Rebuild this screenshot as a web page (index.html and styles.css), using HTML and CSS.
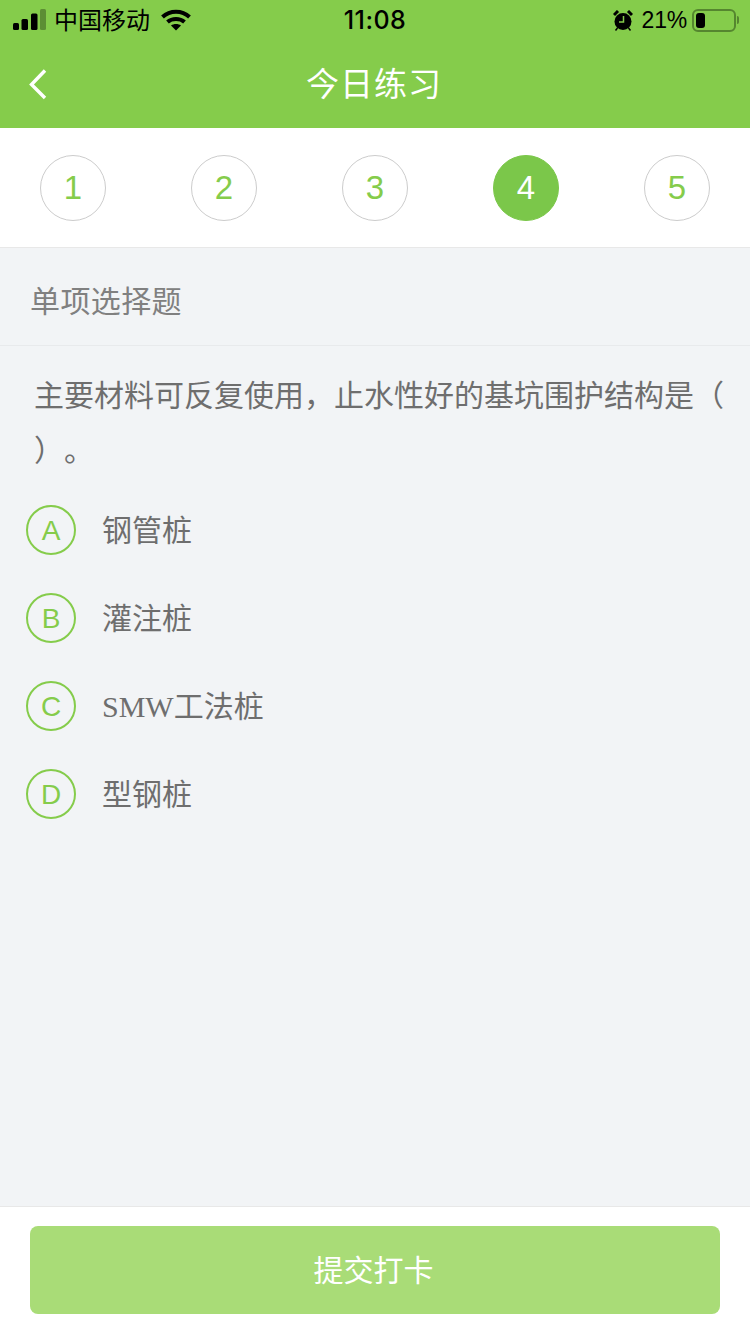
FILE: index.html
```html
<!DOCTYPE html>
<html lang="zh-CN">
<head>
    <meta charset="UTF-8">
    <title>今日练习</title>
    <link rel="stylesheet" href="styles.css">
</head>
<body>
    <div class="top">
        <div class="status">
            <div class="status-left">
                <svg class="signal" width="34" height="24" viewBox="0 0 34 24">
                    <rect x="1" y="15" width="6" height="7" rx="1.500" fill="#000"/>
                    <rect x="9.500" y="11" width="6.500" height="11" rx="1.500" fill="#000"/>
                    <rect x="19" y="5.500" width="6.500" height="16.500" rx="1.500" fill="#000"/>
                    <rect x="28" y="1" width="6" height="21" rx="1.500" fill="#000" opacity="0.3"/>
                </svg>
                <span class="carrier">中国移动</span>
                <svg class="wifi" width="30" height="22" viewBox="0 0 30 22">
                    <path d="M1.500 8C9 1 21 1 28.500 8" fill="none" stroke="#000" stroke-width="4"/>
                    <path d="M6.500 13C11 9 19 9 23.500 13" fill="none" stroke="#000" stroke-width="4"/>
                    <path d="M10 16.500C12.500 14.500 17.500 14.500 20 16.500L15 21.500Z" fill="#000"/>
                </svg>
            </div>
            <div class="clock">11:08</div>
            <div class="status-right">
                <svg class="alarm" width="20" height="21" viewBox="0 0 20 21">
                    <circle cx="10" cy="11.500" r="8.500" fill="#000"/>
                    <path d="M1 5L5 1M15 1L19 5" stroke="#000" stroke-width="3"/>
                    <path d="M2.500 20.500L4.500 18M17.500 20.500L15.500 18" stroke="#000" stroke-width="1.500"/>
                    <path d="M10.500 6V12H6" fill="none" stroke="#85cc4b" stroke-width="1.500"/>
                </svg>
                <span class="percent">21%</span>
                <div class="battery"><div class="battery-level"></div></div>
                <div class="battery-cap"></div>
            </div>
        </div>
        <div class="nav">
            <svg class="back" width="20" height="32" viewBox="0 0 20 32">
                <path d="M17 2.500L3.500 16.500L17 30" fill="none" stroke="#fff" stroke-width="3.400"/>
            </svg>
            <div class="nav-title">今日练习</div>
        </div>
    </div>

    <div class="steps">
        <div class="step">1</div>
        <div class="step">2</div>
        <div class="step">3</div>
        <div class="step active">4</div>
        <div class="step">5</div>
    </div>

    <div class="main">
        <div class="type">单项选择题</div>
        <div class="question">主要材料可反复使用，止水性好的基坑围护结构是（ ）。</div>
        <div class="options">
            <div class="option"><span class="letter">A</span><span class="text">钢管桩</span></div>
            <div class="option"><span class="letter">B</span><span class="text">灌注桩</span></div>
            <div class="option"><span class="letter">C</span><span class="text"><span class="latin">SMW</span>工法桩</span></div>
            <div class="option"><span class="letter">D</span><span class="text">型钢桩</span></div>
        </div>
    </div>

    <div class="bottom">
        <div class="submit">提交打卡</div>
    </div>
</body>
</html>
```

FILE: styles.css
```css
* {
    box-sizing: border-box;
}
body {
    margin: 0;
    height: 1334px;
    display: flex;
    flex-direction: column;
    background-color: #f2f4f6;
    font-family: "Noto Sans CJK SC", "Liberation Sans", sans-serif;
    overflow: hidden;
}
.top {
    height: 128px;
    background-color: #85cc4b;
    flex-shrink: 0;
}
.status {
    height: 42px;
    display: flex;
    align-items: center;
    justify-content: space-between;
    padding: 0 11px 2px 12px;
    position: relative;
    color: #000;
}
.status-left, .status-right {
    display: flex;
    align-items: center;
}
.carrier {
    font-size: 24px;
    margin-left: 8px;
    line-height: 30px;
    padding-bottom: 2px;
}
.wifi {
    margin-left: 11px;
}
.clock {
    position: absolute;
    left: 0;
    right: 0;
    text-align: center;
    font-family: Inter, "Liberation Sans", sans-serif;
    font-size: 25px;
    font-weight: 500;
    letter-spacing: 0.5px;
}
.percent {
    font-family: "Liberation Sans", sans-serif;
    font-size: 23px;
    margin-left: 9px;
    letter-spacing: -0.2px;
}
.battery {
    width: 44px;
    height: 23px;
    margin-left: 5px;
    border: 2px solid #55862f;
    border-radius: 6px;
    padding: 2px;
}
.battery-level {
    width: 9px;
    height: 15px;
    background-color: #000;
    border-radius: 3px;
}
.battery-cap {
    width: 2px;
    height: 8px;
    margin-left: 1px;
    background-color: #55862f;
    border-radius: 0 2px 2px 0;
}
.nav {
    height: 86px;
    display: flex;
    align-items: center;
    justify-content: center;
    position: relative;
}
.back {
    position: absolute;
    left: 28px;
    top: 26px;
}
.nav-title {
    color: #fff;
    font-size: 33px;
    letter-spacing: 1px;
    padding: 0 2px 6px 0;
}
.steps {
    height: 120px;
    flex-shrink: 0;
    background-color: #fff;
    border-bottom: 1px solid #e8e8e8;
    display: flex;
    align-items: center;
    justify-content: space-between;
    padding: 0 40px 0 40px;
}
.step {
    width: 66px;
    height: 66px;
    border: 1px solid #ccc;
    border-radius: 50%;
    display: flex;
    align-items: center;
    justify-content: center;
    color: #85cc4b;
    font-family: "Liberation Sans", sans-serif;
    font-size: 33px;
}
.step.active {
    background-color: #7bc74a;
    border-color: #7bc74a;
    color: #fff;
}
.main {
    flex: 1;
    min-height: 0;
}
.type {
    height: 98px;
    padding: 4px 0 0 30px;
    border-bottom: 1px solid #e8eaec;
    display: flex;
    align-items: center;
    color: #808080;
    font-size: 30px;
    letter-spacing: 0.4px;
}
.question {
    padding: 20px 20px 0 34px;
    color: #6e6e6e;
    font-size: 30px;
    line-height: 55px;
    text-spacing-trim: space-all;
}
.options {
    padding: 10px 0 0 26px;
}
.option {
    height: 88px;
    display: flex;
    align-items: center;
}
.letter {
    width: 50px;
    height: 50px;
    padding-top: 2px;
    border: 2px solid #85cc4b;
    border-radius: 50%;
    display: flex;
    align-items: center;
    justify-content: center;
    color: #85cc4b;
    font-family: "Liberation Sans", sans-serif;
    font-size: 28px;
}
.text {
    margin-left: 26px;
    padding-bottom: 4px;
    color: #6e6e6e;
    font-size: 30px;
}
.latin {
    font-family: "Liberation Serif", serif;
}
.bottom {
    height: 128px;
    flex-shrink: 0;
    background-color: #fff;
    border-top: 1px solid #e8e8e8;
    padding: 19px 30px 0;
}
.submit {
    height: 88px;
    padding: 0 3px 4px 0;
    background-color: #a9dc77;
    border-radius: 8px;
    color: #fff;
    font-size: 30px;
    display: flex;
    align-items: center;
    justify-content: center;
}
```
